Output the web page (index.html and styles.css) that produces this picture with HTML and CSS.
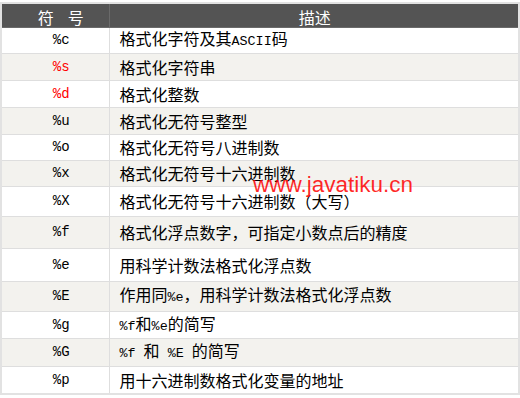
FILE: index.html
```html
<!DOCTYPE html>
<html lang="zh">
<head>
<meta charset="utf-8">
<link rel="stylesheet" href="styles.css">
</head>
<body>
<div class="wrap">
<table class="fmt">
  <thead>
    <tr class="head"><th class="c1">符<span class="gap"></span>号</th><th class="c2">描述</th></tr>
  </thead>
  <tbody>
    <tr class="h26"><td class="code">%c</td><td class="desc">格式化字符及其<span class="lat">ASCII</span>码</td></tr>
    <tr class="h27 alt"><td class="code red">%s</td><td class="desc">格式化字符串</td></tr>
    <tr class="h27"><td class="code red">%d</td><td class="desc">格式化整数</td></tr>
    <tr class="h27 alt"><td class="code">%u</td><td class="desc">格式化无符号整型</td></tr>
    <tr class="h26"><td class="code">%o</td><td class="desc">格式化无符号八进制数</td></tr>
    <tr class="h26 alt"><td class="code">%x</td><td class="desc">格式化无符号十六进制数</td></tr>
    <tr class="h30"><td class="code">%X</td><td class="desc">格式化无符号十六进制数（大写）</td></tr>
    <tr class="h32 alt"><td class="code">%f</td><td class="desc">格式化浮点数字，可指定小数点后的精度</td></tr>
    <tr class="h33"><td class="code">%e</td><td class="desc">用科学计数法格式化浮点数</td></tr>
    <tr class="h30 alt"><td class="code">%E</td><td class="desc">作用同<span class="lat">%e</span>，用科学计数法格式化浮点数</td></tr>
    <tr class="h27"><td class="code">%g</td><td class="desc"><span class="lat">%f</span>和<span class="lat">%e</span>的简写</td></tr>
    <tr class="h28 alt"><td class="code">%G</td><td class="desc"><span class="lat">%f </span>和<span class="lat"> %E </span>的简写</td></tr>
    <tr class="h28"><td class="code">%p</td><td class="desc">用十六进制数格式化变量的地址</td></tr>
  </tbody>
</table>
<div class="mark">www.javatiku.cn</div>
</div>
</body>
</html>
```
FILE: styles.css
```css
html, body {
  margin: 0;
  padding: 0;
  background: #ffffff;
}
body {
  padding-top: 2px;
  font-family: "Noto Sans CJK SC", "Noto Sans", sans-serif;
  font-size: 16px;
  color: #000;
}
.wrap {
  position: relative;
  width: 520px;
}
.fmt {
  width: 520px;
  border-collapse: collapse;
  border: 2px solid #e2e2e2;
  table-layout: fixed;
}
.fmt th, .fmt td {
  box-sizing: border-box;
  padding: 0;
  border: 1px solid #dedede;
  line-height: 18px;
}
.fmt .c1 { width: 108px; }
.head {
  height: 24px;
  background: #545454;
}
.head th {
  color: #ffffff;
  font-weight: normal;
  font-size: 16px;
  vertical-align: bottom;
  text-align: center;
  border-color: #6a6a6a;
  border-top-color: #e2e2e2;
  padding-bottom: 1px;
}
.gap {
  display: inline-block;
  width: 14px;
}
.fmt .head .c1 { padding-left: 11px; }
.fmt .head .c2 { padding-left: 2px; }
tbody tr { background: #ffffff; }
tbody tr.alt { background: #f3f2ee; }
.fmt td { vertical-align: middle; }
.fmt td.desc { padding-left: 10px; }
.fmt td.code {
  font-family: "Liberation Mono", monospace;
  font-size: 14px;
  text-align: center;
  padding-left: 12px;
}
.red { color: #ff0000; }
.lat {
  font-family: "Liberation Mono", monospace;
  font-size: 13.4px;
}
.h26 { height: 26px; }
.h27 { height: 27px; }
.h28 { height: 28px; }
.h30 { height: 30px; }
.h32 { height: 32px; }
.h33 { height: 33px; }
.mark {
  position: absolute;
  left: 253px;
  top: 170px;
  font-family: "Liberation Sans", Arial, sans-serif;
  font-size: 22.5px;
  color: rgba(255, 0, 0, 0.85);
  pointer-events: none;
  line-height: 26px;
}
```
